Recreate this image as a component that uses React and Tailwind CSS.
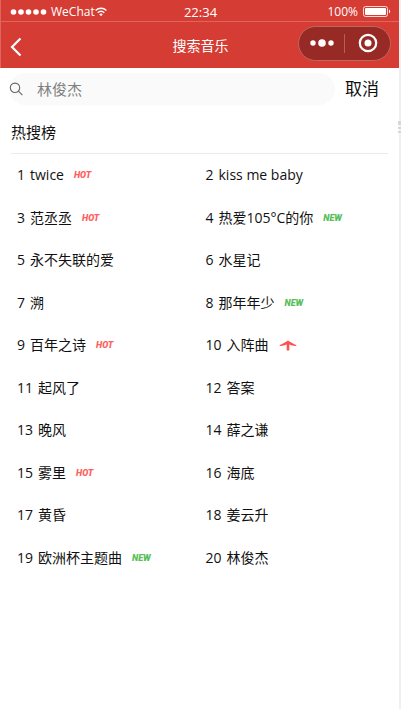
import React from "react";

const songs = [
  { title: "twice", tag: "hot" },
  { title: "kiss me baby" },
  { title: "范丞丞", tag: "hot" },
  { title: "热爱105°C的你", tag: "new" },
  { title: "永不失联的爱" },
  { title: "水星记" },
  { title: "溯" },
  { title: "那年年少", tag: "new" },
  { title: "百年之诗", tag: "hot" },
  { title: "入阵曲", tag: "up" },
  { title: "起风了" },
  { title: "答案" },
  { title: "晚风" },
  { title: "薛之谦" },
  { title: "雾里", tag: "hot" },
  { title: "海底" },
  { title: "黄昏" },
  { title: "姜云升" },
  { title: "欧洲杯主题曲", tag: "new" },
  { title: "林俊杰" },
];

function StatusBar() {
  return (
    <div className="grid h-[22px] grid-cols-3 items-center border-b border-[#e0655e] pt-[2px] pr-2 pl-[9px] text-xs leading-4">
      <div className="flex items-center">
        <svg width="37" height="8" viewBox="0 0 37 8" fill="white" aria-hidden="true">
          <circle cx="3.5" cy="4" r="2.8" />
          <circle cx="11" cy="4" r="2.8" />
          <circle cx="18.5" cy="4" r="2.8" />
          <circle cx="26" cy="4" r="2.8" />
          <circle cx="33.5" cy="4" r="2.8" />
        </svg>
        <span className="ml-1">WeChat</span>
        <svg width="12" height="10" viewBox="0 0 12 10" fill="none" stroke="white" strokeWidth="1.4" aria-hidden="true">
          <path d="M.6 3.4C3.6.5 8.4.5 11.4 3.4" />
          <path d="M2.7 5.7c1.9-1.7 4.7-1.7 6.6 0" />
          <path d="M4.2 7.2 6 9.3l1.8-2.1c-1-.9-2.6-.9-3.6 0Z" fill="white" stroke="none" />
        </svg>
      </div>
      <span className="text-center text-[13px]">22:34</span>
      <div className="flex items-center justify-end gap-[5px]">
        <span>100%</span>
        <svg width="28" height="12" viewBox="0 0 28 12" aria-hidden="true">
          <rect x=".5" y=".5" width="24" height="10" rx="2" fill="none" stroke="white" strokeOpacity=".8" />
          <rect x="2" y="2" width="21" height="7" rx="1" fill="white" />
          <path d="M26 3.6c1.6.7 1.6 3.2 0 3.9Z" fill="white" />
        </svg>
      </div>
    </div>
  );
}

function NavBar() {
  return (
    <div className="grid h-[46px] grid-cols-[1fr_auto_1fr] items-center pr-2 pl-[9px]">
      <button type="button" aria-label="返回" className="mt-1 w-3">
        <svg width="12" height="20" viewBox="0 0 12 20" fill="none" stroke="white" strokeWidth="2.2" aria-hidden="true">
          <path d="M10.5 1.5 2 10l8.5 8.5" />
        </svg>
      </button>
      <h1 className="mt-[2px] text-sm leading-5">搜索音乐</h1>
      <div className="mb-1 flex h-[35px] w-[93px] items-center justify-self-end rounded-full border border-[#bf6660] bg-[#982a25]">
        <button type="button" aria-label="更多" className="flex flex-1 justify-center">
          <svg width="24" height="8" viewBox="0 0 24 8" fill="white" aria-hidden="true">
            <circle cx="3" cy="4" r="2.7" />
            <circle cx="12" cy="4" r="3.8" />
            <circle cx="21" cy="4" r="2.7" />
          </svg>
        </button>
        <span className="h-[19px] w-px bg-[#b35f5b]" />
        <button type="button" aria-label="关闭" className="flex flex-1 justify-center">
          <svg width="20" height="20" viewBox="0 0 20 20" aria-hidden="true">
            <circle cx="10" cy="10" r="8.2" fill="none" stroke="white" strokeWidth="2.2" />
            <circle cx="10" cy="10" r="3.5" fill="white" />
          </svg>
        </button>
      </div>
    </div>
  );
}

function Tag({ kind }) {
  if (kind === "up") {
    return (
      <svg width="18" height="11" viewBox="0 0 18 11" className="ml-[10px]" role="img" aria-label="上升">
        <path d="M9 .4C11.5 2.2 14.5 3.8 17.8 5.2L16.5 6C14 5.6 12 5 10.3 4.4V10.4H7.7V4.4C6 5 4 5.6 1.5 6L.2 5.2C3.5 3.8 6.5 2.2 9 .4Z" fill="#ff5050" />
      </svg>
    );
  }
  return (
    <span
      className={
        "ml-[10px] font-[Roboto] text-[9px] leading-3 font-black italic " +
        (kind === "hot" ? "text-[#ff6060]" : "text-[#55c058]")
      }
    >
      {kind === "hot" ? "HOT" : "NEW"}
    </span>
  );
}

export default function App() {
  return (
    <div className="relative min-h-screen border-r-2 border-[#f0f0f0] bg-white font-['Open_Sans','Noto_Sans_CJK_SC',sans-serif] text-[#111]">
      <header className="border-l border-[#e0655e] bg-[#d53c34] text-white">
        <StatusBar />
        <NavBar />
      </header>

      <main>
        <form className="flex items-center pt-[5px] pr-5 pl-[9px]" onSubmit={(e) => e.preventDefault()}>
          <label className="flex h-8 min-w-0 flex-1 items-center rounded-full bg-[#fafafa]">
            <svg width="14" height="14" viewBox="0 0 14 14" fill="none" stroke="#666" strokeWidth="1.1" className="shrink-0" aria-hidden="true">
              <circle cx="6" cy="5.8" r="4.7" />
              <path d="m9.4 9.2 4 4" />
            </svg>
            <input
              type="text"
              aria-label="搜索"
              placeholder="林俊杰"
              className="ml-[14px] min-w-0 flex-1 bg-transparent text-[15px] leading-6 outline-none placeholder:text-[#808080]"
            />
          </label>
          <button type="button" className="ml-[10px] text-[17px] leading-6">取消</button>
        </form>

        <section className="px-[11px]">
          <h2 className="border-b border-[#ebebeb] pt-[15px] pb-[9px] text-[15px] leading-6">热搜榜</h2>
          <ol className="grid h-[425px] auto-rows-fr grid-cols-2 text-sm leading-5">
            {songs.map((song, i) => (
              <li key={song.title} className="flex items-center pl-[6px]">
                <span>{i + 1}</span>
                <span className="ml-[5px]">{song.title}</span>
                {song.tag && <Tag kind={song.tag} />}
              </li>
            ))}
          </ol>
        </section>
      </main>

      {/* resize grip on the panel edge */}
      <div className="absolute top-[121px] -right-[2px] flex flex-col gap-[2px]" aria-hidden="true">
        <span className="h-1 w-[3px] bg-[#d8d8d8]" />
        <span className="h-[2px] w-[3px] bg-[#d8d8d8]" />
        <span className="h-[2px] w-[3px] bg-[#d8d8d8]" />
      </div>
    </div>
  );
}
